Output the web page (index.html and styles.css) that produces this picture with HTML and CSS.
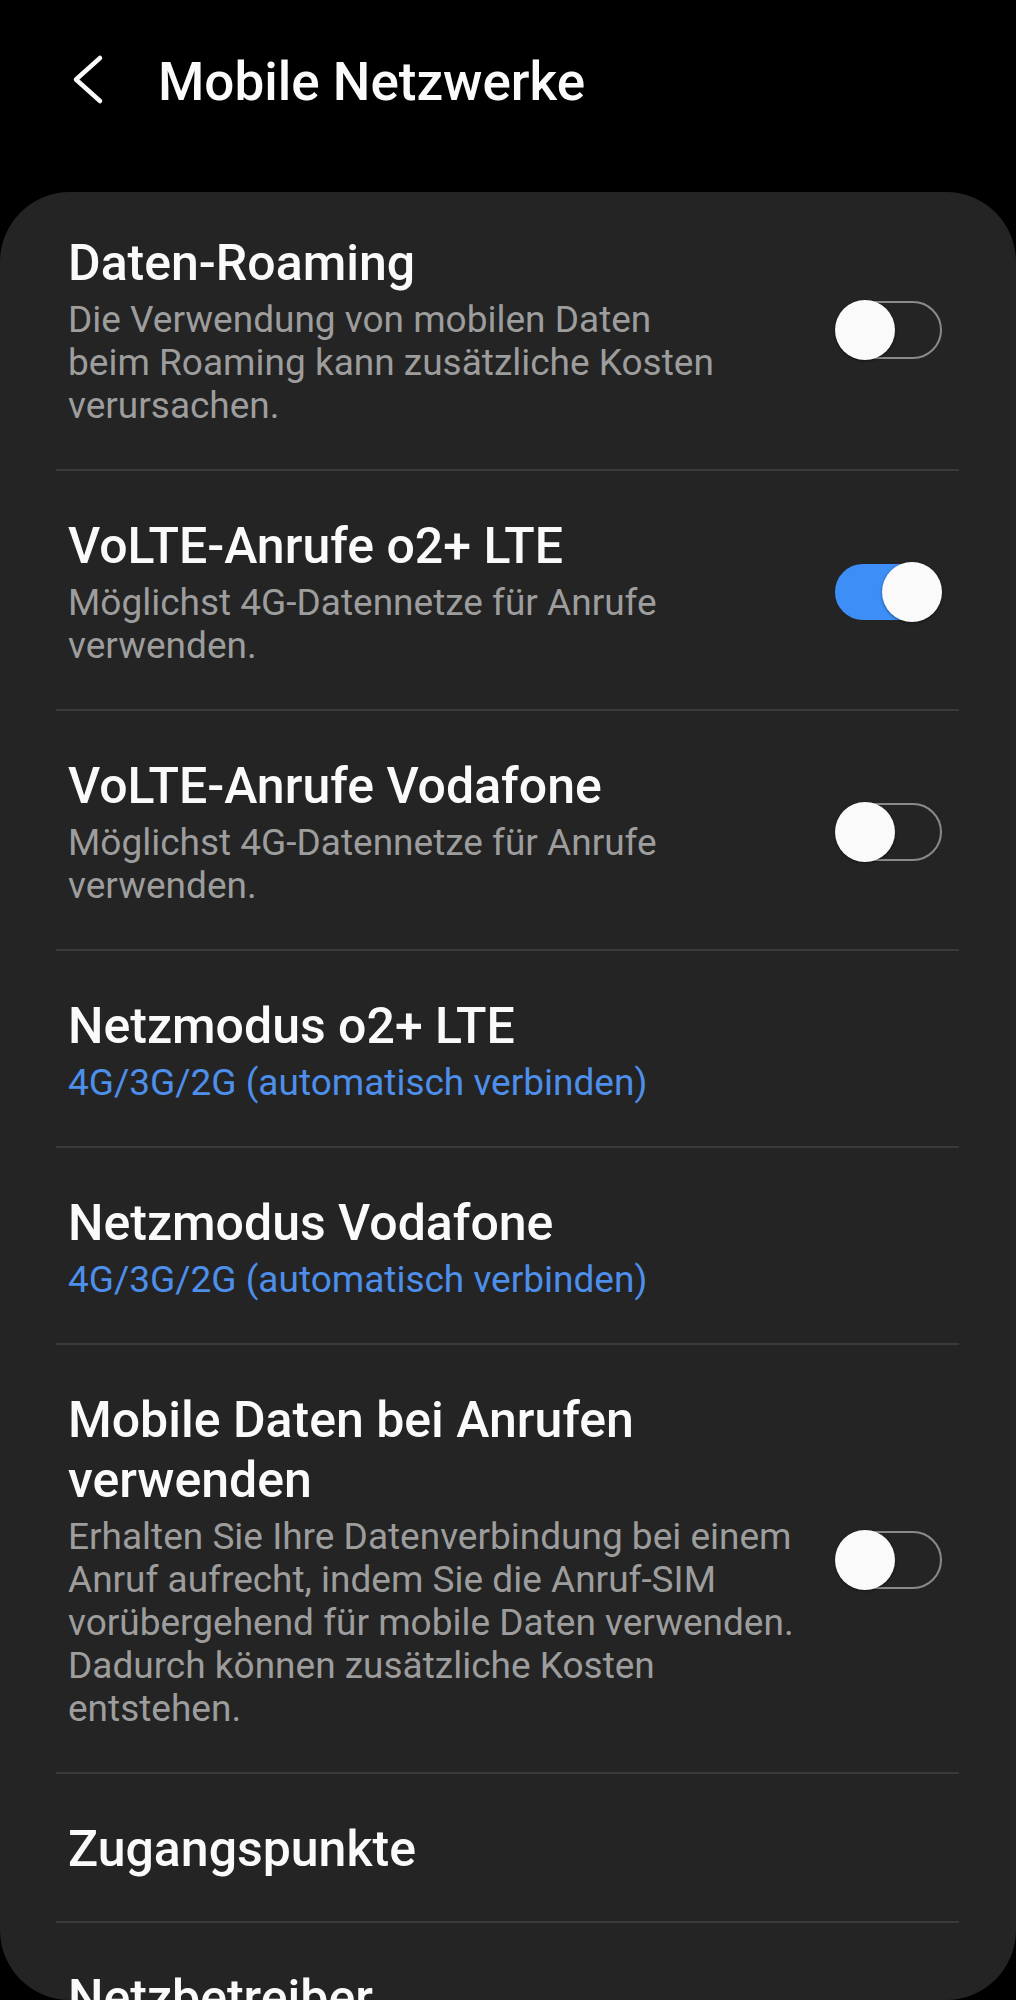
FILE: index.html
```html
<!DOCTYPE html>
<html lang="de">
<head>
    <meta charset="UTF-8">
    <title>Mobile Netzwerke</title>
    <link rel="stylesheet" href="styles.css">
</head>
<body>
<div class="header">
    <svg class="back" width="40" height="64" viewBox="0 0 40 64">
        <polyline points="32,8 8,29.5 32,51" fill="none" stroke="#fafafa" stroke-width="4.5" stroke-linecap="round" stroke-linejoin="round"/>
    </svg>
    <h1 class="title">Mobile Netzwerke</h1>
</div>
<div class="card">
    <ul class="list">
        <li class="row">
            <div class="text">
                <div class="name">Daten-Roaming</div>
                <div class="sub">Die Verwendung von mobilen Daten<br>beim Roaming kann zusätzliche Kosten verursachen.</div>
            </div>
            <span class="switch"></span>
        </li>
        <li class="row">
            <div class="text">
                <div class="name">VoLTE-Anrufe o2+ LTE</div>
                <div class="sub">Möglichst 4G-Datennetze für Anrufe verwenden.</div>
            </div>
            <span class="switch on"></span>
        </li>
        <li class="row">
            <div class="text">
                <div class="name">VoLTE-Anrufe Vodafone</div>
                <div class="sub">Möglichst 4G-Datennetze für Anrufe verwenden.</div>
            </div>
            <span class="switch"></span>
        </li>
        <li class="row">
            <div class="text">
                <div class="name">Netzmodus o2+ LTE</div>
                <div class="sub blue">4G/3G/2G (automatisch verbinden)</div>
            </div>
        </li>
        <li class="row">
            <div class="text">
                <div class="name">Netzmodus Vodafone</div>
                <div class="sub blue">4G/3G/2G (automatisch verbinden)</div>
            </div>
        </li>
        <li class="row">
            <div class="text">
                <div class="name">Mobile Daten bei Anrufen verwenden</div>
                <div class="sub">Erhalten Sie Ihre Datenverbindung bei einem Anruf aufrecht, indem Sie die Anruf-SIM vorübergehend für mobile Daten verwenden. Dadurch können zusätzliche Kosten entstehen.</div>
            </div>
            <span class="switch"></span>
        </li>
        <li class="row">
            <div class="text">
                <div class="name">Zugangspunkte</div>
            </div>
        </li>
        <li class="row">
            <div class="text">
                <div class="name">Netzbetreiber</div>
            </div>
        </li>
    </ul>
</div>
</body>
</html>
```

FILE: styles.css
```css
*{
    margin: 0;
    padding: 0;
    box-sizing: border-box;
}
html,body{
    background: #000;
    height: 2000px;
    overflow: hidden;
}
body{
    font-family: Roboto, "Noto Sans", sans-serif;
    color: #fafafa;
}
li{
    list-style: none;
}
.header{
    display: flex;
    align-items: center;
    padding: 50px 0 78px 68px;
    height: 192px;
}
.header .back{
    display: block;
    flex-shrink: 0;
}
.header .title{
    margin-left: 50px;
    font-size: 53px;
    font-weight: 500;
    line-height: 64px;
}
.card{
    height: 1808px;
    background: #242424;
    border-radius: 70px;
    overflow: hidden;
}
.list{
    padding: 0 57px 0 56px;
}
.row{
    display: flex;
    align-items: center;
    gap: 37px;
    padding: 45px 17px 42px 12px;
    border-bottom: 2px solid #3a3a3a;
}
.row:first-child{
    padding-top: 41px;
}
.row .text{
    flex: 1;
    min-width: 0;
}
.row .name{
    font-size: 50px;
    font-weight: 500;
    line-height: 60px;
}
.row .sub{
    margin-top: 5px;
    font-size: 37px;
    line-height: 43px;
    color: #9d9d9d;
}
.row .sub.blue{
    color: #4d8fea;
}
.switch{
    position: relative;
    flex-shrink: 0;
    width: 107px;
    height: 60px;
}
.switch::before{
    content: "";
    position: absolute;
    top: 1px;
    bottom: 1px;
    left: 2px;
    right: 0;
    border: 2px solid #8a8a8a;
    border-radius: 30px;
}
.switch::after{
    content: "";
    position: absolute;
    top: 0;
    left: 0;
    width: 60px;
    height: 60px;
    border-radius: 50%;
    background: #fafafa;
    box-shadow: 0 1px 3px rgba(0,0,0,.45);
}
.switch.on::before{
    top: 2px;
    bottom: 2px;
    left: 0;
    right: 2px;
    border-color: #3e8ef7;
    background: #3e8ef7;
}
.switch.on::after{
    left: auto;
    right: 0;
}
```
